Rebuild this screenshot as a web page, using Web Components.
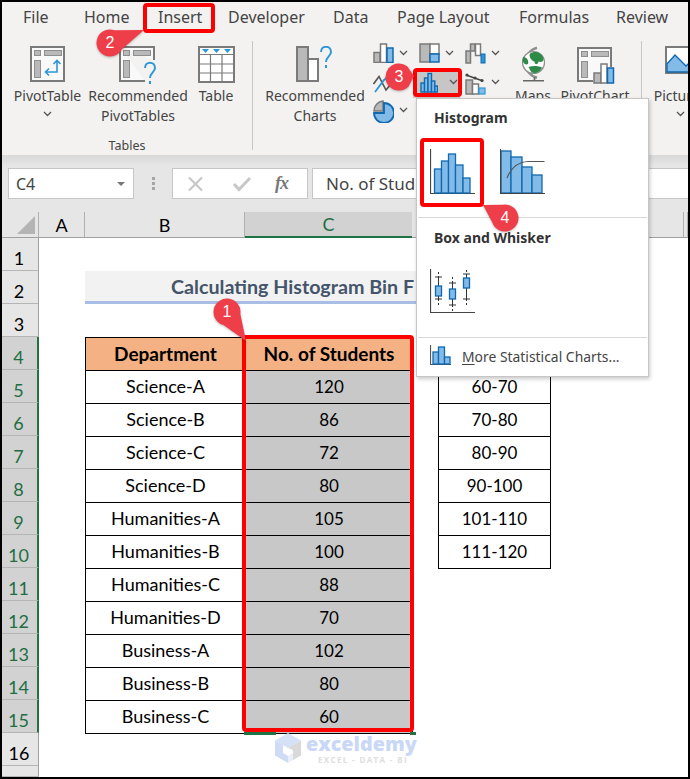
<!DOCTYPE html>
<html>
<head>
<meta charset="utf-8">
<style>
  html, body { margin: 0; padding: 0; background: #fff; }
</style>
</head>
<body>

<xl-window>
  <xl-tabs></xl-tabs>
  <xl-ribbon></xl-ribbon>
  <xl-formula></xl-formula>
  <xl-sheet></xl-sheet>
  <xl-chart-menu></xl-chart-menu>

  <xl-mark x="143" y="3" w="72" h="30"></xl-mark>
  <xl-mark x="413" y="68" w="49" h="29"></xl-mark>
  <xl-mark x="420" y="138" w="64" h="69"></xl-mark>
  <xl-mark x="242" y="335" w="172" h="397"></xl-mark>

  <xl-callout x="227" y="312" tx="246" ty="341">1</xl-callout>
  <xl-callout x="110" y="43" tx="144" ty="30">2</xl-callout>
  <xl-callout x="399" y="77" tx="414" ty="76">3</xl-callout>
  <xl-callout x="505" y="218" tx="483" ty="205">4</xl-callout>
</xl-window>

<script>
;(function(){

  const GREY = '#7a7a7a', MID = '#b9b9b9', BLUE = '#83bbe8', EDGE = '#1069b0', SKY = '#2e96d6';

  const question = (x, y) => `<path d="M${x} ${y+6} C${x} ${y-1} ${x+10} ${y-1} ${x+10} ${y+6} C${x+10} ${y+10} ${x+5} ${y+11} ${x+5} ${y+16} M${x+5} ${y+19} V${y+22}" fill="none" stroke="${SKY}" stroke-width="2"/>`;

  const boxes = `
    <g fill="${MID}" stroke="#8e8e8e">
      <rect x="4.5" y="4.5" width="6" height="5"/>
      <rect x="14.5" y="4.5" width="17" height="5"/>
      <rect x="4.5" y="14.5" width="6" height="17"/>
    </g>`;

  // every icon: [width, height, markup]
  const ICONS = {
    pivot: [35, 36, `
      <rect x="1" y="1" width="33" height="34" fill="#f9f9f9" stroke="${GREY}" stroke-width="2"/>${boxes}
      <path d="M27 15V26H16M23.5 18L27 14.5L30.5 18M19 22.5L15.5 26L19 29.5" fill="none" stroke="${SKY}" stroke-width="1.6"/>`],
    recpivot: [39, 38, `
      <path d="M1 1H35V14M26 35H1V1" fill="#f9f9f9" stroke="${GREY}" stroke-width="2"/>${boxes}
      ${question(26, 16)}`],
    table: [37, 37, `
      <rect x="1" y="1" width="35" height="35" fill="#fff" stroke="${GREY}" stroke-width="2"/>
      <path d="M1 8.5H36M1 18H36M1 27H36M12.5 8V36M24 8V36" stroke="${GREY}" stroke-width="1.2" fill="none"/>
      <path d="M4 3H11L7.5 7ZM15 3H22L18.5 7ZM26 3H33L29.5 7Z" fill="${SKY}"/>`],
    recchart: [38, 36, `
      <rect x="1" y="1" width="11" height="34" fill="${MID}" stroke="${GREY}" stroke-width="2"/>
      <rect x="12" y="13" width="10" height="22" fill="#fff" stroke="${GREY}" stroke-width="2"/>
      ${question(25, 0)}`],
    bars: [21, 20, `
      <rect x="1" y="9.5" width="6" height="10" fill="${MID}" stroke="${GREY}" stroke-width="1.5"/>
      <rect x="7.5" y="1" width="6" height="18.5" fill="#fff" stroke="${GREY}" stroke-width="1.5"/>
      <rect x="14" y="5" width="6" height="14.5" fill="${BLUE}" stroke="${EDGE}" stroke-width="1.5"/>`],
    treemap: [21, 20, `
      <rect x="1" y="1" width="10" height="18" fill="${MID}" stroke="${GREY}" stroke-width="1.5"/>
      <rect x="11" y="1" width="9" height="10" fill="#fff" stroke="${GREY}" stroke-width="1.5"/>
      <rect x="11" y="11" width="9" height="8" fill="${BLUE}" stroke="${EDGE}" stroke-width="1.5"/>`],
    waterfall: [21, 21, `
      <rect x="1" y="8" width="4.5" height="12" fill="${MID}" stroke="${GREY}" stroke-width="1.5"/>
      <rect x="5.5" y="1" width="4.5" height="7" fill="${MID}" stroke="${GREY}" stroke-width="1.5"/>
      <rect x="10.5" y="1" width="5" height="11.5" fill="#fff" stroke="${GREY}" stroke-width="1.5"/>
      <rect x="16" y="11" width="4" height="9" fill="${SKY}" stroke="${EDGE}"/>`],
    lines: [21, 22, `
      <path d="M0.5 12L6 4.5L13 18L19.5 10" fill="none" stroke="#555" stroke-width="1.6"/>
      <path d="M2 20L11 8L20 1" fill="none" stroke="${SKY}" stroke-width="1.8"/>`],
    histsmall: [18, 21, `
      <g fill="${BLUE}" stroke="${EDGE}" stroke-width="1.4">
        <rect x="1" y="11" width="3.5" height="9"/>
        <rect x="4.5" y="6" width="3.5" height="14"/>
        <rect x="8" y="1.5" width="3.5" height="18.5"/>
        <rect x="11.5" y="9" width="3.3" height="11"/>
        <rect x="14.8" y="14" width="2.7" height="6"/>
      </g>`],
    combo: [21, 23, `
      <rect x="1" y="8" width="6.5" height="14" fill="${MID}" stroke="${GREY}" stroke-width="1.5"/>
      <rect x="7.5" y="12" width="6" height="10" fill="#fff" stroke="${GREY}" stroke-width="1.5"/>
      <rect x="14" y="16" width="6" height="6" fill="${BLUE}" stroke="${SKY}" stroke-width="1.2"/>
      <path d="M1 3L18 9" stroke="#444" stroke-width="1.4"/>
      <circle cx="2" cy="3" r="1.6" fill="#444"/><circle cx="10" cy="6" r="1.6" fill="#444"/><circle cx="17" cy="8.5" r="1.6" fill="#444"/>`],
    pie: [21, 23, `
      <path d="M9 11V1A10 10 0 0 0 -0 11Z" transform="translate(1 0)" fill="${MID}" stroke="${GREY}" stroke-width="1.5"/>
      <path d="M11 3A10 10 0 1 1 1 13H11Z" fill="${BLUE}" stroke="${EDGE}" stroke-width="1.8"/>`],
    globe: [34, 37, `
      <path d="M21 1.7A15.5 15.5 0 0 0 21 31.7" fill="none" stroke="#8f8f8f" stroke-width="2.6"/>
      <circle cx="17.5" cy="16.5" r="11" fill="#fff" stroke="#8f8f8f" stroke-width="1.2"/>
      <path d="M14 7.5C18 4.5 25 5.5 27.5 12C28 16 25 16.5 22.5 15.5C22 19 18.5 19 18.5 15.5C15.5 15 12.5 10.5 14 7.5Z" fill="#2e8b47"/>
      <path d="M7 11C10.5 10.5 13 14.5 12 18C9.5 19 8 18 6.5 15Z" fill="#2e8b47"/>
      <path d="M12.5 21C17 19.5 22.5 20 26 21.5C24.5 26 19 28 15.5 26.5Z" fill="#2e8b47"/>
      <path d="M18.5 31V34.5M7 34.8H28" fill="none" stroke="#666" stroke-width="1.6"/>`],
    pivotchart: [39, 38, `
      <path d="M17 35H2V2H35V21" fill="#f9f9f9" stroke="${GREY}" stroke-width="2"/>
      <g fill="${MID}" stroke="#8e8e8e">
        <rect x="5.5" y="5.5" width="6" height="5"/>
        <rect x="15.5" y="5.5" width="17" height="5"/>
        <rect x="5.5" y="15.5" width="6" height="16"/>
      </g>
      <rect x="18" y="27" width="7" height="10" fill="${MID}" stroke="${GREY}" stroke-width="1.5"/>
      <rect x="25" y="18" width="6" height="19" fill="#fff" stroke="${GREY}" stroke-width="1.5"/>
      <rect x="31.5" y="22" width="6" height="15" fill="${BLUE}" stroke="${EDGE}" stroke-width="1.5"/>`],
    picture: [30, 28, `
      <rect x="1" y="1" width="36" height="26" fill="#fff" stroke="${GREY}" stroke-width="2"/>
      <path d="M2 18L10 9L21 20L27 14L36 24V26H2Z" fill="${BLUE}" stroke="${EDGE}" stroke-width="1.3"/>`],
    chevron: [9, 6, `<path d="M1 1L4.5 4.5L8 1" fill="none" stroke="#555" stroke-width="1.3"/>`],
    hist: [45, 46, `
      <path d="M0.5 1V45.5H45" fill="none" stroke="#444" stroke-width="1.2"/>
      <g fill="${BLUE}" stroke="${EDGE}" stroke-width="1.3">
        <rect x="4.5" y="21" width="7" height="24"/>
        <rect x="11.5" y="13" width="7" height="32"/>
        <rect x="18.5" y="6" width="7" height="39"/>
        <rect x="25.5" y="17" width="7.5" height="28"/>
        <rect x="33" y="30" width="7" height="15"/>
      </g>`],
    pareto: [45, 46, `
      <g fill="${BLUE}" stroke="${EDGE}" stroke-width="1.3">
        <rect x="1" y="3" width="10" height="42"/>
        <rect x="11" y="9" width="11" height="36"/>
        <rect x="22" y="19" width="10" height="26"/>
        <rect x="32" y="27" width="10" height="18"/>
      </g>
      <path d="M0.5 1V45.5H45" fill="none" stroke="#444" stroke-width="1.2"/>
      <path d="M7 30C11 20 17 14 28 13.5H44.5" fill="none" stroke="#555" stroke-width="1.2"/>`],
    boxes: [45, 45, `
      <path d="M0.5 0V43.5H45" fill="none" stroke="#444" stroke-width="1.2"/>
      <path d="M8.5 8V17M8.5 27V30M12 8H5M5 30H12M22.5 14V20M22.5 30V36M19 14H26M19 36H26M36.5 5V9M36.5 19V30M33 5H40M33 30H40" fill="none" stroke="#333" stroke-width="1"/>
      <path d="M8.5 3V8M8.5 30V38M22.5 8V14M22.5 36V43M36.5 1V5M36.5 30V38" fill="none" stroke="#333" stroke-dasharray="2 2"/>
      <g fill="${BLUE}" stroke="${EDGE}" stroke-width="1.3">
        <rect x="5.5" y="17" width="6" height="10"/>
        <rect x="19.5" y="20" width="6" height="10"/>
        <rect x="33.5" y="9" width="6" height="10"/>
      </g>`],
    more: [21, 21, `
      <path d="M0.5 0V19.5H21" fill="none" stroke="#555" stroke-width="1.2"/>
      <g fill="${BLUE}" stroke="${EDGE}" stroke-width="1.3">
        <rect x="3" y="7" width="5.5" height="12"/>
        <rect x="8.5" y="2" width="6" height="17"/>
        <rect x="14.5" y="12" width="5.5" height="7"/>
      </g>`],
  };

  customElements.define('xl-icon', class extends HTMLElement {
    constructor() {
      super();
      this.attachShadow({ mode: 'open' });
    }
    connectedCallback() {
      const [w, h, body] = ICONS[this.getAttribute('name')];
      this.shadowRoot.innerHTML = `
        <style>:host { display: block; width: ${w}px; height: ${h}px; flex: none; } svg { display: block; overflow: hidden; }</style>
        <svg width="${w}" height="${h}" viewBox="0 0 ${w} ${h}">${body}</svg>`;
    }
  });

  customElements.define('xl-window', class extends HTMLElement {
    constructor() {
      super();
      this.attachShadow({ mode: 'open' }).innerHTML = `
        <style>
          :host {
            display: flex;
            flex-direction: column;
            position: relative;
            box-sizing: border-box;
            width: 690px;
            height: 779px;
            border: 2px solid #000;
            overflow: hidden;
            background: #fff;
            font-family: "Noto Sans", "Open Sans", sans-serif;
          }
        </style>
        <slot></slot>`;
    }
  });

  customElements.define('xl-tabs', class extends HTMLElement {
    constructor() {
      super();
      const names = ['File', 'Home', 'Insert', 'Developer', 'Data', 'Page Layout', 'Formulas', 'Review'];
      this.attachShadow({ mode: 'open' }).innerHTML = `
        <style>
          :host {
            display: grid;
            grid-template-columns: 61px 74px 70px 105px 64px 122px 97px 1fr;
            height: 35px;
            padding-left: 21px;
            background: #f3f2f1;
            color: #444;
            font-size: 16px;
            line-height: 31px;
            white-space: nowrap;
          }
        </style>
        ${names.map(n => `<div>${n}</div>`).join('')}`;
    }
  });

  customElements.define('xl-rb-button', class extends HTMLElement {
    constructor() {
      super();
      this.attachShadow({ mode: 'open' });
    }
    connectedCallback() {
      const w = this.getAttribute('w');
      const lines = this.getAttribute('label').split('|');
      const drop = this.hasAttribute('drop');
      this.shadowRoot.innerHTML = `
        <style>
          :host {
            display: flex;
            flex-direction: column;
            align-items: center;
            flex: none;
            width: ${w}px;
            font-size: 14px;
            line-height: 20px;
            color: #444;
            white-space: nowrap;
          }
          .ic { height: 40px; padding-top: 9px; box-sizing: content-box; }
          .chev { height: 20px; display: flex; align-items: center; padding-bottom: 4px; box-sizing: border-box; }
        </style>
        <div class="ic"><xl-icon name="${this.getAttribute('icon')}"></xl-icon></div>
        ${lines.map(l => `<div>${l}</div>`).join('')}
        ${drop ? `<div class="chev"><xl-icon name="chevron"></xl-icon></div>` : ''}`;
    }
  });

  customElements.define('xl-rb-small', class extends HTMLElement {
    constructor() {
      super();
      this.attachShadow({ mode: 'open' });
    }
    connectedCallback() {
      const on = this.hasAttribute('selected');
      this.shadowRoot.innerHTML = `
        <style>
          :host {
            display: flex;
            align-items: flex-start;
            gap: 5px;
            height: 22px;
            ${on ? 'background:#c8c6c4; margin:-2px 5px -4px -6px; padding:2px 0 4px 7px;' : ''}
          }
          .c { width: 9px; padding-top: 7px; ${on ? 'margin-left:6px;' : ''} }
        </style>
        <xl-icon name="${this.getAttribute('icon')}"></xl-icon>
        <div class="c"><xl-icon name="chevron"></xl-icon></div>`;
    }
  });

  customElements.define('xl-ribbon', class extends HTMLElement {
    constructor() {
      super();
      this.attachShadow({ mode: 'open' }).innerHTML = `
        <style>
          :host {
            display: flex;
            align-items: flex-start;
            flex: none;
            height: 118px;
            background: #f3f2f1;
          }
          .tables { position: relative; display: flex; width: 240px; height: 118px; padding-left: 10px; flex: none; }
          .group-name {
            position: absolute;
            left: 0;
            width: 250px;
            bottom: -1px;
            text-align: center;
            font-size: 12.5px;
            line-height: 20px;
            color: #444;
          }
          .sep { width: 1px; height: 109px; margin-top: 4px; background: #c8c6c4; flex: none; }
          .charts { display: flex; padding-left: 9px; width: 379px; flex: none; }
          .small {
            display: grid;
            grid-template-columns: repeat(3, 46px);
            grid-auto-rows: 28.5px;
            padding: 6px 0 0 5px;
            flex: none;
          }
          .pics { padding-left: 13px; }
        </style>
        <div class="tables">
          <xl-rb-button w="71" icon="pivot" label="PivotTable" drop></xl-rb-button>
          <xl-rb-button w="110" icon="recpivot" label="Recommended|PivotTables"></xl-rb-button>
          <xl-rb-button w="46" icon="table" label="Table"></xl-rb-button>
          <div class="group-name">Tables</div>
        </div>
        <div class="sep"></div>
        <div class="charts">
          <xl-rb-button w="106" icon="recchart" label="Recommended|Charts"></xl-rb-button>
          <div class="small">
            <xl-rb-small icon="bars"></xl-rb-small>
            <xl-rb-small icon="treemap"></xl-rb-small>
            <xl-rb-small icon="waterfall"></xl-rb-small>
            <xl-rb-small icon="lines"></xl-rb-small>
            <xl-rb-small icon="histsmall" selected></xl-rb-small>
            <xl-rb-small icon="combo"></xl-rb-small>
            <xl-rb-small icon="pie"></xl-rb-small>
          </div>
          <xl-rb-button w="44" icon="globe" label="Maps"></xl-rb-button>
          <xl-rb-button w="80" icon="pivotchart" label="PivotChart"></xl-rb-button>
        </div>
        <div class="sep"></div>
        <div class="pics">
          <xl-rb-button w="50" icon="picture" label="Pictures" drop></xl-rb-button>
        </div>`;
    }
  });

  customElements.define('xl-formula', class extends HTMLElement {
    constructor() {
      super();
      this.attachShadow({ mode: 'open' }).innerHTML = `
        <style>
          :host {
            display: flex;
            flex: none;
            box-sizing: border-box;
            height: 57px;
            padding: 13px 0 13px 6px;
            background: linear-gradient(#d8d8d8, #e6e6e6 11px);
            color: #444;
          }
          .box {
            box-sizing: border-box;
            height: 31px;
            background: #fff;
            border: 1px solid #c6c6c6;
            flex: none;
            display: flex;
            align-items: center;
          }
          .name { width: 126px; padding: 0 8px 0 7px; justify-content: space-between; font-size: 16px; }
          .arrow { width: 0; height: 0; border: 4px solid transparent; border-top: 4px solid #777; border-bottom: 0; }
          .dots { width: 38px; display: flex; flex-direction: column; align-items: center; justify-content: center; gap: 2px; flex: none; }
          .dots i { width: 3px; height: 3px; background: #a6a6a6; display: block; }
          .fx { width: 136px; position: relative; }
          .fx svg { flex: none; }
          .fx span { font: italic 700 18px "Liberation Serif", serif; color: #777; margin-left: 23px; letter-spacing: -1px; }
          .input { flex: 1; margin-left: 4px; border-right: 0; padding-left: 13px; font-size: 17px; white-space: nowrap; overflow: hidden; }
        </style>
        <div class="box name"><span>C4</span><i class="arrow"></i></div>
        <div class="dots"><i></i><i></i><i></i></div>
        <div class="box fx">
          <svg width="18" height="16" viewBox="0 0 18 16" style="margin-left:14px"><path d="M2 1.5L15 14.5M15 1.5L2 14.5" stroke="#c8c8c8" stroke-width="2.2"/></svg>
          <svg width="20" height="16" viewBox="0 0 20 16" style="margin-left:27px"><path d="M2 8L7 13.5L18 2" fill="none" stroke="#c8c8c8" stroke-width="3"/></svg>
          <span>fx</span>
        </div>
        <div class="box input">No. of Students</div>`;
    }
  });

  customElements.define('xl-sheet', class extends HTMLElement {
    constructor() {
      super();
      const data = [
        ['Science-A', 120, '60-70'], ['Science-B', 86, '70-80'], ['Science-C', 72, '80-90'], ['Science-D', 80, '90-100'],
        ['Humanities-A', 105, '101-110'], ['Humanities-B', 100, '111-120'], ['Humanities-C', 88], ['Humanities-D', 70],
        ['Business-A', 102], ['Business-B', 80], ['Business-C', 60],
      ];

      let cells = `<div class="hd corner" style="grid-row:1;grid-column:1"><svg width="36" height="26" viewBox="0 0 36 26"><path d="M33 4V22H15Z" fill="#b4b4b4"/></svg></div>`;
      ['A', 'B', 'C', '', '', '', ''].forEach((c, i) => {
        cells += `<div class="hd col ${c == 'C' ? 'on' : ''}" style="grid-column:${i + 2}">${c}</div>`;
      });
      for (let r = 1; r <= 17; r++) {
        const on = r >= 4 && r <= 15;
        cells += `<div class="hd row ${on ? 'on' : ''}" style="grid-row:${r + 1}">${r == 17 ? '' : r}</div>`;
      }
      cells += `<div class="title" style="grid-row:3;grid-column:3/7">Calculating Histogram Bin F</div>`;
      cells += `<div class="c b head" style="grid-row:5;grid-column:3">Department</div>`;
      cells += `<div class="c b head" style="grid-row:5;grid-column:4">No. of Students</div>`;
      cells += `<div class="c b" style="grid-row:5;grid-column:6"></div>`;
      data.forEach((d, i) => {
        const row = i + 6;
        cells += `<div class="c name" style="grid-row:${row};grid-column:3">${d[0]}</div>`;
        cells += `<div class="c sel" style="grid-row:${row};grid-column:4">${d[1]}</div>`;
        if (d[2]) cells += `<div class="c" style="grid-row:${row};grid-column:6">${d[2]}</div>`;
      });

      this.attachShadow({ mode: 'open' }).innerHTML = `
        <style>
          :host {
            display: grid;
            flex: none;
            position: relative;
            grid-template-columns: 37px 46px 160px 167px 26px 112px 134px 4px;
            grid-template-rows: 26px repeat(16, 33px) 11px;
            height: 565px;
            overflow: hidden;
            background: #fff;
            font-family: Lato, "Liberation Sans", sans-serif;
            font-size: 17px;
            color: #000;
          }
          .hd {
            box-sizing: border-box;
            background: #e6e6e6;
            display: flex;
            align-items: center;
            justify-content: center;
            font-size: 18px;
          }
          .corner { background: #e6e6e6; border-right: 1px solid #b0b0b0; border-bottom: 1px solid #a0a0a0; }
          .col { grid-row: 1; border-right: 1px solid #b0b0b0; border-bottom: 1px solid #a0a0a0; }
          .col.on { background: #d2d2d2; color: #1f6e43; border-bottom: 2px solid #217346; border-right: 0; }
          .row { grid-column: 1; border-bottom: 1px solid #b5b5b5; border-right: 1px solid #a0a0a0; padding: 7px 2px 0 0; }
          .row.on { background: #d2d2d2; color: #1f6e43; border-right: 2px solid #217346; }
          .title {
            box-sizing: border-box;
            background: #f2f2f2;
            border-bottom: 3px solid #a9bee4;
            padding-left: 86px;
            font-weight: 700;
            font-size: 19.7px;
            line-height: 32px;
            color: #44546a;
            white-space: nowrap;
          }
          .c {
            box-sizing: border-box;
            margin: 0 -1px -1px 0;
            border: 1px solid #000;
            padding-bottom: 2px;
            display: flex;
            align-items: center;
            justify-content: center;
            white-space: nowrap;
          }
          .name { font-size: 18px; }
          .head { background: #f4b183; font-weight: 700; font-size: 19px; }
          .sel { background: #c8c8c8; }
          .tick { position: absolute; background: #217346; height: 3px; top: 520px; }
          .wm { position: absolute; left: 271px; top: 519px; width: 150px; height: 36px; }
          .wm svg { position: absolute; left: 0; top: 1px; }
          .wm b { position: absolute; left: 33px; top: 3px; font: 800 19.8px/20px "Open Sans", sans-serif; color: #c9d8f6; }
          .wm i { position: absolute; left: 45px; top: 24px; font: 700 8px/10px "Open Sans", sans-serif; color: #dedede; letter-spacing: 1.35px; white-space: nowrap; }
        </style>
        ${cells}
        <div class="tick" style="left:242px;width:32px"></div>
        <div class="tick" style="left:408px;width:6px"></div>
        <div class="wm">
          <svg width="30" height="32" viewBox="0 0 30 32">
            <path d="M15 1L28 8.5L15 16L2 8.5Z" fill="#d5e1f7"/>
            <path d="M2 8.5L10 13V21L15 24V31L2 23.5Z" fill="#cfdcf5"/>
            <path d="M28 8.5V23.5L20 28V18L15 16Z" fill="#d9d9d9"/>
            <path d="M15 24L20 21V28L15 31Z" fill="#e9eef8"/>
          </svg>
          <b>exceldemy</b>
          <i>EXCEL - DATA - BI</i>
        </div>`;
    }
  });

  customElements.define('xl-chart-menu', class extends HTMLElement {
    constructor() {
      super();
      this.attachShadow({ mode: 'open' }).innerHTML = `
        <style>
          :host {
            position: absolute;
            left: 414px;
            top: 96px;
            box-sizing: border-box;
            width: 233px;
            height: 279px;
            display: flex;
            flex-direction: column;
            background: #fff;
            border: 1px solid #c8c6c4;
            box-shadow: 1px 2px 4px rgba(0,0,0,.22);
            color: #444;
            font-size: 14px;
          }
          section { box-sizing: border-box; padding-left: 13px; flex: none; }
          section + section { border-top: 1px solid #d9d9d9; margin: 0 1px; padding-left: 12px; }
          h3 { margin: 0 0 0 4px; font-size: 14px; font-weight: 700; line-height: 20px; color: #333; }
          .one { height: 118px; padding-top: 9px; }
          .two { height: 120px; padding-top: 10px; }
          .icons { display: flex; gap: 25px; margin-top: 20px; }
          .two .icons { margin-top: 21px; }
          .more { display: flex; align-items: flex-start; padding-top: 7px; flex: 1; }
          .more span { margin-left: 11px; line-height: 24px; color: #444; font-size: 13.9px; }
          u { text-underline-offset: 2px; }
        </style>
        <section class="one">
          <h3>Histogram</h3>
          <div class="icons"><xl-icon name="hist"></xl-icon><xl-icon name="pareto"></xl-icon></div>
        </section>
        <section class="two">
          <h3>Box and Whisker</h3>
          <div class="icons"><xl-icon name="boxes"></xl-icon></div>
        </section>
        <section class="more">
          <xl-icon name="more"></xl-icon>
          <span><u>M</u>ore Statistical Charts...</span>
        </section>`;
    }
  });

  // red rectangle drawn over the screenshot, attributes are page coordinates
  customElements.define('xl-mark', class extends HTMLElement {
    constructor() {
      super();
      this.attachShadow({ mode: 'open' });
    }
    connectedCallback() {
      const a = n => +this.getAttribute(n);
      this.shadowRoot.innerHTML = `
        <style>
          :host {
            position: absolute;
            box-sizing: border-box;
            left: ${a('x') - 2}px;
            top: ${a('y') - 2}px;
            width: ${a('w')}px;
            height: ${a('h')}px;
            border: 4px solid #f00;
            border-radius: 4px;
          }
        </style>`;
    }
  });

  // numbered balloon with a tail pointing at (tx, ty)
  customElements.define('xl-callout', class extends HTMLElement {
    constructor() {
      super();
      this.attachShadow({ mode: 'open' });
    }
    connectedCallback() {
      const a = n => +this.getAttribute(n);
      const r = 13.5, x = a('x') - 2, y = a('y') - 2, tx = a('tx') - 2, ty = a('ty') - 2;
      const ang = Math.atan2(ty - y, tx - x), spread = 0.85;
      const p1 = [x + r * Math.cos(ang - spread), y + r * Math.sin(ang - spread)];
      const p2 = [x + r * Math.cos(ang + spread), y + r * Math.sin(ang + spread)];
      this.shadowRoot.innerHTML = `
        <style>
          :host { position: absolute; left: 0; top: 0; width: 0; height: 0; }
          svg { position: absolute; left: 0; top: 0; overflow: visible; }
          span {
            position: absolute;
            left: ${x - 14}px;
            top: ${y - 14}px;
            width: 28px;
            text-align: center;
            color: #fff;
            font: 400 16px/28px "Liberation Sans", sans-serif;
          }
        </style>
        <svg width="1" height="1"><path d="M${p1} L${tx} ${ty} L${p2} A${r} ${r} 0 1 1 ${p1} Z" fill="#ee3e4a" style="filter:drop-shadow(0 1px 1px rgba(0,0,0,.25))"/></svg>
        <span><slot></slot></span>`;
    }
  });

})();
</script>
</body>
</html>
